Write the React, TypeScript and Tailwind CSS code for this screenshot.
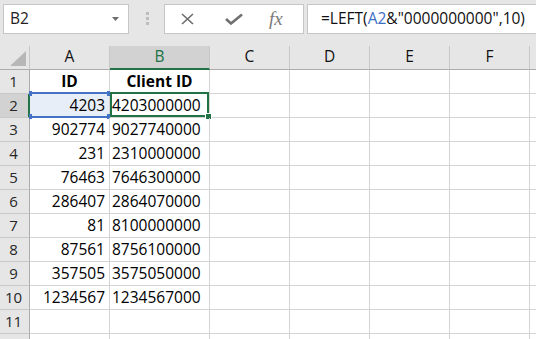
const rows: [string, string, string][] = [
  ["1", "ID", "Client ID"],
  ["2", "4203", "4203000000"],
  ["3", "902774", "9027740000"],
  ["4", "231", "2310000000"],
  ["5", "76463", "7646300000"],
  ["6", "286407", "2864070000"],
  ["7", "81", "8100000000"],
  ["8", "87561", "8756100000"],
  ["9", "357505", "3575050000"],
  ["10", "1234567", "1234567000"],
  ["11", "", ""],
  ["", "", ""],
];

function Toolbar() {
  return (
    <div className="flex h-[46px] items-start bg-[#e6e6e6] pt-[4px]">
      <div className="ml-[3px] flex h-[30px] w-[126px] items-center justify-between border border-[#c6c6c6] bg-white pl-[6px] pr-[9px]">
        <span className="text-[15.5px] text-[#222]">B2</span>
        <svg width="7" height="4" viewBox="0 0 7 4">
          <path d="M0 0 L7 0 L3.5 4 Z" fill="#6d6d6d" />
        </svg>
      </div>
      <div className="ml-[17px] mt-[8px] flex w-[3px] flex-col gap-[2px]">
        <div className="h-[3px] w-[3px] bg-[#bdbdbd]" />
        <div className="h-[3px] w-[3px] bg-[#bdbdbd]" />
        <div className="h-[3px] w-[3px] bg-[#bdbdbd]" />
      </div>
      <div className="ml-[15px] flex h-[30px] w-[140px] items-center border border-[#c6c6c6] bg-white pl-[16px]">
        <svg width="13" height="12" viewBox="0 0 13 12">
          <path d="M1 1 L12 11 M12 1 L1 11" stroke="#6b6b6b" strokeWidth="1.6" />
        </svg>
        <svg className="ml-[31px]" width="18" height="12" viewBox="0 0 18 12">
          <path d="M1 6 L6 10.5 L17 1.5" stroke="#707070" strokeWidth="2.6" fill="none" />
        </svg>
        <span className="ml-[26px] font-['Liberation_Serif',serif] text-[19px] italic text-[#7a7a7a]">fx</span>
      </div>
      <div className="-mr-[2px] ml-[3px] flex h-[30px] flex-1 items-center border border-[#c6c6c6] bg-white pl-[13px]">
        <span className="whitespace-nowrap text-[15.5px] text-[#111]">
          =LEFT(<span className="text-[#3a6fc4]">A2</span>&amp;"0000000000",10)
        </span>
      </div>
    </div>
  );
}

function ColHeader() {
  const hd = "flex h-[24px] items-end justify-center border-b border-r border-b-[#ababab] border-r-[#c8c8c8] bg-[#e6e6e6] pb-[1px] text-[15.5px] text-[#111]";
  return (
    <div className="flex">
      <div className="flex h-[24px] w-[30px] shrink-0 items-end justify-end border-b border-r border-b-[#ababab] border-r-[#c8c8c8] bg-[#e6e6e6] pb-[3px] pr-[3px]">
        <svg width="16" height="15" viewBox="0 0 16 15">
          <path d="M16 0 L16 15 L0 15 Z" fill="#b7b7b7" />
        </svg>
      </div>
      <div className={`${hd} w-[80px] shrink-0`}>A</div>
      <div className="flex h-[24px] w-[100px] shrink-0 items-end justify-center border-b-2 border-r border-b-[#217346] border-r-[#c8c8c8] bg-[#d2d2d2] text-[15.5px] text-[#217346]">B</div>
      <div className={`${hd} w-[80px] shrink-0`}>C</div>
      <div className={`${hd} w-[80px] shrink-0`}>D</div>
      <div className={`${hd} w-[80px] shrink-0`}>E</div>
      <div className={`${hd} w-[80px] shrink-0`}>F</div>
      <div className={`${hd} w-[40px] shrink-0`}></div>
    </div>
  );
}

function Row({ n, a, b }: { n: string; a: string; b: string }) {
  const sel = n === "2";
  const head = n === "1";
  const cell = "h-[24px] shrink-0 border-b border-r border-[#d4d4d4]";
  return (
    <div className="flex">
      <div
        className={
          sel
            ? "flex h-[24px] w-[30px] shrink-0 items-center justify-center border-b border-r-2 border-b-[#c8c8c8] border-r-[#217346] bg-[#d2d2d2] pr-[1px] text-[15px] text-[#262626]"
            : "flex h-[24px] w-[30px] shrink-0 items-center justify-center border-b border-r border-b-[#c8c8c8] border-r-[#ababab] bg-[#e6e6e6] pr-[2px] text-[15px] text-[#262626]"
        }
      >
        {n}
      </div>
      <div
        className={`${cell} relative flex w-[80px] items-center ${head ? "justify-center font-bold" : "justify-end pr-[4px]"} ${sel ? "bg-[#e8eef8]" : ""}`}
      >
        {a}
        {sel && (
          <>
            <div className="absolute -top-[2px] left-0 right-0 h-[2px] bg-[#4472c4]" />
            <div className="absolute -bottom-[1px] left-0 right-0 h-[2px] bg-[#4472c4]" />
            <div className="absolute -left-[1px] -top-[3px] h-[5px] w-[3px] bg-[#4472c4]" />
            <div className="absolute -right-[1px] -top-[3px] h-[5px] w-[3px] bg-[#4472c4]" />
            <div className="absolute -bottom-[2px] -left-[1px] h-[5px] w-[3px] bg-[#4472c4]" />
            <div className="absolute -bottom-[2px] -right-[1px] h-[5px] w-[3px] bg-[#4472c4]" />
          </>
        )}
      </div>
      <div className={`${cell} relative flex w-[100px] items-center ${head ? "justify-center font-bold" : "pl-[2px]"}`}>
        {b}
        {sel && (
          <>
            <div className="absolute -top-[2px] bottom-0 left-0 right-0 border-2 border-[#217346]" />
            <div className="absolute left-[95px] top-[19px] h-[7px] w-[7px] border border-white bg-[#217346]" />
          </>
        )}
      </div>
      <div className={`${cell} w-[80px]`} />
      <div className={`${cell} w-[80px]`} />
      <div className={`${cell} w-[80px]`} />
      <div className={`${cell} w-[80px]`} />
      <div className={`${cell} w-[40px]`} />
    </div>
  );
}

export default function App() {
  return (
    <div className="h-[339px] w-[536px] overflow-hidden bg-white font-['Open_Sans',sans-serif] text-[15.5px] text-black">
      <Toolbar />
      <ColHeader />
      {rows.map(([n, a, b], i) => (
        <Row key={i} n={n} a={a} b={b} />
      ))}
    </div>
  );
}
